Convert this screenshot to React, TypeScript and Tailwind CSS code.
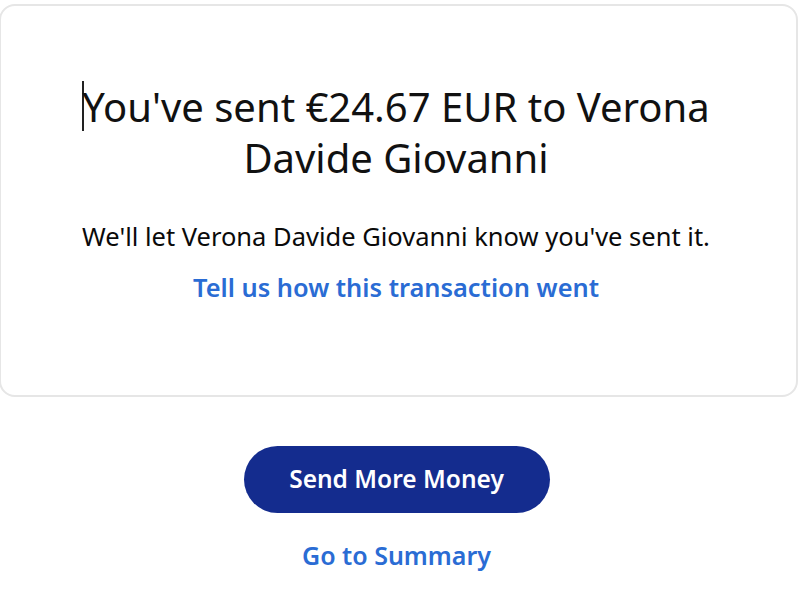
import React from 'react';

const font = { fontFamily: '"Noto Sans", "Open Sans", sans-serif' };

export default function App() {
  return (
    <div className="w-[800px] h-[602px] bg-white overflow-hidden" style={font}>
      <div className="ml-[-1px] mt-[4px] w-[799px] h-[393px] rounded-2xl border-2 border-[#e6e6e6] flex flex-col items-center pr-[5px]">
        <h1 className="mt-[75px] w-[680px] text-center text-[40px] leading-[51px] font-normal text-[#111]">
          <span className="inline-block w-[2px] h-[50px] bg-[#222] align-top -mr-[2px]"></span>
          You've sent €24.67 EUR to Verona Davide Giovanni
        </h1>
        <p className="mt-[38px] text-[25.5px] leading-[30px] text-[#0a0a0a]">
          We'll let Verona Davide Giovanni know you've sent it.
        </p>
        <a className="mt-[21px] text-[25.4px] leading-[30px] font-semibold text-[#2a6cd4]">
          Tell us how this transaction went
        </a>
      </div>
      <div className="w-[793px] flex flex-col items-center">
        <button className="mt-[49px] w-[306px] h-[67px] rounded-full bg-[#142c8e] text-white text-[24.5px] font-semibold">
          Send More Money
        </button>
        <a className="mt-[26px] text-[25px] leading-[32px] font-semibold text-[#2a6cd4]">
          Go to Summary
        </a>
      </div>
    </div>
  );
}
